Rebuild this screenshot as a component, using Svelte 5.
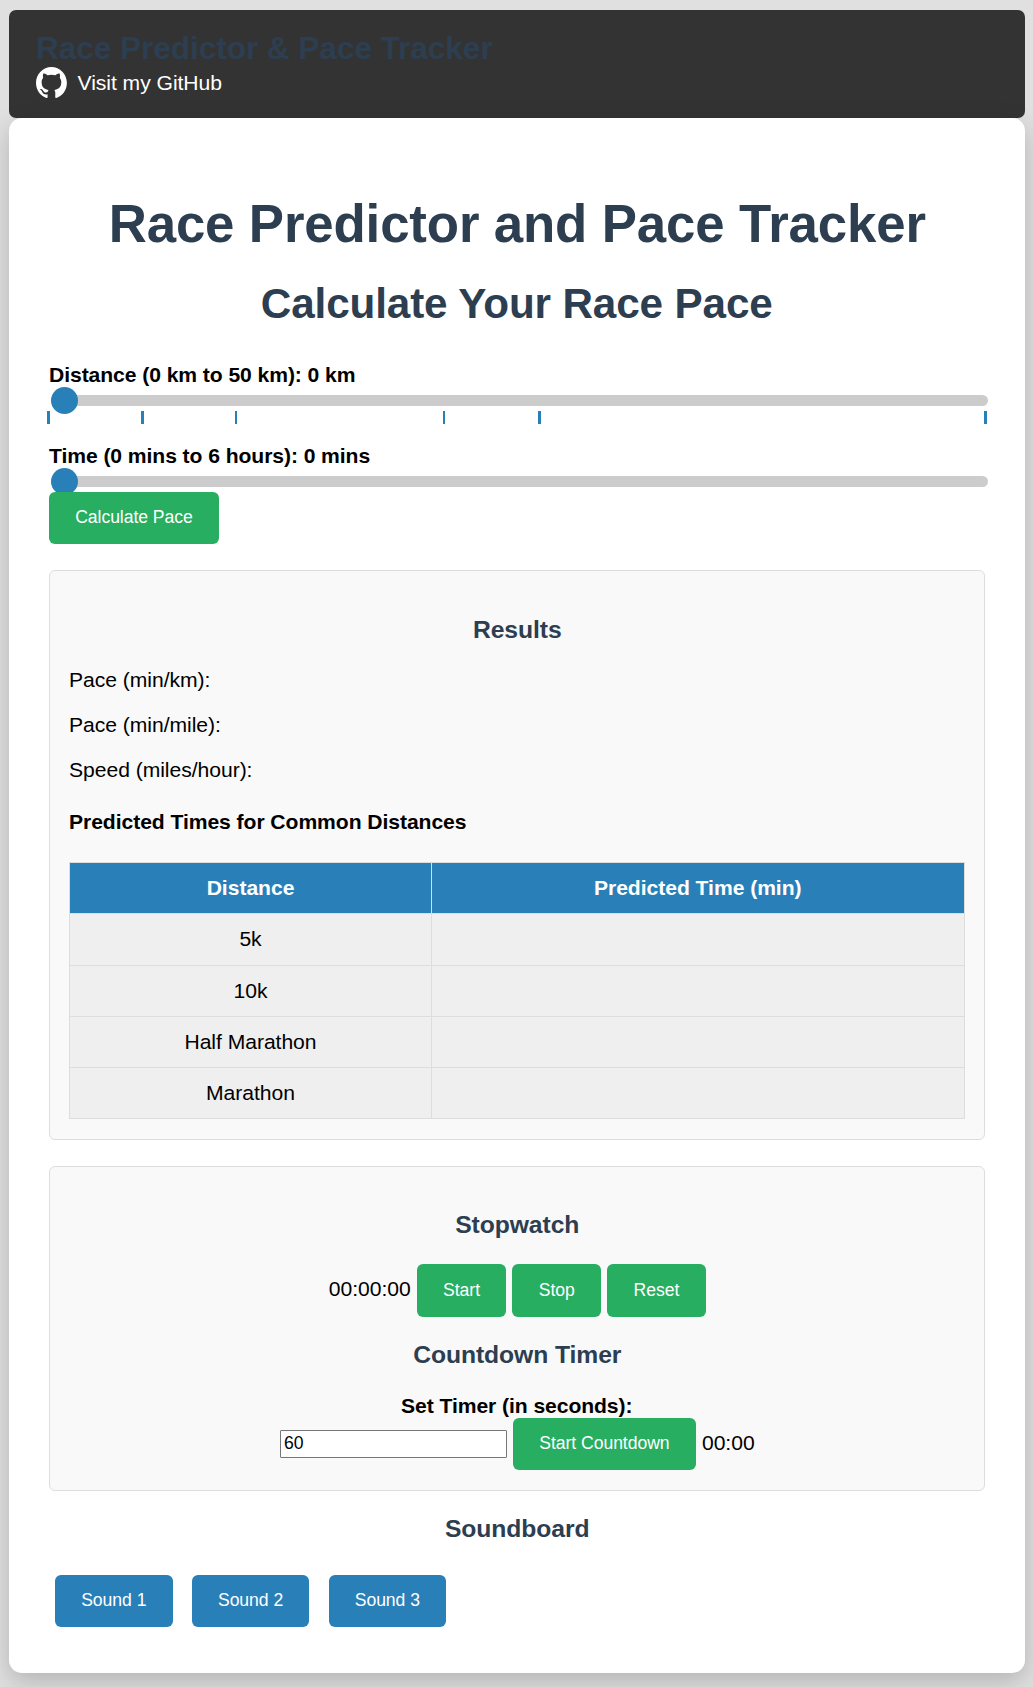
<script>
  let distance = $state(0);
  let time = $state(0);
  let seconds = $state(60);

  // Positions of the 0k, 5k, 10k, half marathon, marathon and 50k marks
  const ticks = [
    { left: -2, width: 3 },
    { left: 92, width: 3 },
    { left: 186, width: 2 },
    { left: 394, width: 2 },
    { left: 489, width: 3 },
    { left: 935, width: 3 },
  ];
  const races = ['5k', '10k', 'Half Marathon', 'Marathon'];
  const sounds = ['Sound 1', 'Sound 2', 'Sound 3'];
</script>

<div class="page">
  <header>
    <h1>Race Predictor &amp; Pace Tracker</h1>
    <a href="#github">
      <svg viewBox="0 0 98 96" preserveAspectRatio="none" aria-hidden="true">
        <path fill="#fff" fill-rule="evenodd" d="M48.854 0C21.839 0 0 22 0 49.217c0 21.756 13.993 40.172 33.405 46.69 2.427.49 3.316-1.059 3.316-2.362 0-1.141-.08-5.052-.08-9.127-13.59 2.934-16.42-5.867-16.42-5.867-2.184-5.704-5.42-7.17-5.42-7.17-4.448-3.015.324-3.015.324-3.015 4.934.326 7.523 5.052 7.523 5.052 4.367 7.496 11.404 5.378 14.235 4.074.404-3.178 1.699-5.378 3.074-6.6-10.839-1.141-22.243-5.378-22.243-24.283 0-5.378 1.94-9.778 5.014-13.2-.485-1.222-2.184-6.275.486-13.038 0 0 4.125-1.304 13.426 5.052a46.97 46.97 0 0 1 12.214-1.63c4.125 0 8.33.571 12.213 1.63 9.302-6.356 13.427-5.052 13.427-5.052 2.67 6.763.97 11.816.485 13.038 3.155 3.422 5.015 7.822 5.015 13.2 0 18.905-11.404 23.06-22.324 24.283 1.78 1.548 3.316 4.481 3.316 9.126 0 6.6-.08 11.897-.08 13.526 0 1.304.89 2.853 3.316 2.364 19.412-6.52 33.405-24.935 33.405-46.691C97.707 22 75.788 0 48.854 0z" />
      </svg>
      <span>Visit my GitHub</span>
    </a>
  </header>

  <main>
    <h1>Race Predictor and Pace Tracker</h1>
    <h2>Calculate Your Race Pace</h2>

    <label for="distance">Distance (0 km to 50 km): {distance} km</label>
    <input id="distance" type="range" min="0" max="50" bind:value={distance} />
    <div class="ticks">
      {#each ticks as tick}
        <span style="left: {tick.left}px; width: {tick.width}px"></span>
      {/each}
    </div>

    <label for="time">Time (0 mins to 6 hours): {time} mins</label>
    <input id="time" type="range" min="0" max="360" bind:value={time} />
    <button class="calculate">Calculate Pace</button>

    <section class="panel results">
      <h3>Results</h3>
      <p>Pace (min/km):</p>
      <p>Pace (min/mile):</p>
      <p>Speed (miles/hour):</p>
      <h4>Predicted Times for Common Distances</h4>
      <table>
        <thead>
          <tr><th class="name">Distance</th><th>Predicted Time (min)</th></tr>
        </thead>
        <tbody>
          {#each races as race}
            <tr><td>{race}</td><td></td></tr>
          {/each}
        </tbody>
      </table>
    </section>

    <section class="panel timers">
      <h3>Stopwatch</h3>
      <div class="row stopwatch">
        <span>00:00:00</span>
        <button>Start</button>
        <button>Stop</button>
        <button>Reset</button>
      </div>
      <h3>Countdown Timer</h3>
      <label for="seconds">Set Timer (in seconds):</label>
      <div class="row countdown">
        <input id="seconds" class="seconds" type="number" bind:value={seconds} />
        <button>Start Countdown</button>
        <span>00:00</span>
      </div>
    </section>

    <h3 class="sound-title">Soundboard</h3>
    <div class="sounds">
      {#each sounds as sound}
        <button>{sound}</button>
      {/each}
    </div>
  </main>
</div>

<style>
  :global(body) {
    background: #e0e0e0;
  }
  .page {
    box-sizing: border-box;
    height: 1687px;
    padding: 10px 8.5px 0 9px;
    overflow: hidden;
    font: 21.12px/24px Arial, "Liberation Sans", sans-serif;
    letter-spacing: -0.04px;
    color: #000;
  }
  h1, h2, h3, h4, p {
    margin: 0;
  }
  h1, h2, h3 {
    color: #2c3e50;
    text-align: center;
  }
  header {
    box-sizing: border-box;
    height: 108px;
    padding: 20px 27px 0;
    background: #333;
    border-radius: 7px;
  }
  header h1 {
    font-size: 31.68px;
    line-height: 36px;
    letter-spacing: -0.1px;
    text-align: left;
  }
  header a {
    display: flex;
    align-items: center;
    gap: 10.5px;
    width: max-content;
    margin-top: 1px;
    color: #fff;
    text-decoration: none;
  }
  header svg {
    width: 31px;
    height: 31px;
  }
  main {
    box-sizing: border-box;
    height: 1555px;
    padding: 76px 40px 0;
    background: #fff;
    border-radius: 13px;
    box-shadow: 0 9px 26px rgba(0, 0, 0, 0.2);
  }
  main > h1 {
    padding-left: 1px;
    font-size: 52.8px;
    line-height: 60px;
    letter-spacing: -0.15px;
  }
  h2 {
    margin: 25.5px 0 35.5px;
    font-size: 42.24px;
    line-height: 48px;
    letter-spacing: -0.13px;
  }
  h3 {
    position: relative;
    top: 1px;
    padding-left: 1px;
    font-size: 24.7px;
    line-height: 28px;
    letter-spacing: -0.08px;
  }
  h4 {
    font-size: 21.12px;
    letter-spacing: -0.06px;
  }
  label {
    display: block;
    font-weight: bold;
    letter-spacing: -0.07px;
  }
  input[type="range"] {
    appearance: none;
    display: block;
    width: calc(100% + 1.5px);
    height: 11px;
    margin: 8px 2px 0;
    background: #ccc;
    border-radius: 5.5px;
    outline: none;
  }
  input[type="range"]::-webkit-slider-thumb {
    appearance: none;
    width: 27px;
    height: 27px;
    background: #2980b9;
    border: 0;
    border-radius: 50%;
  }
  .ticks {
    position: relative;
    height: 13px;
    margin: 5px 0 20px;
  }
  .ticks span {
    position: absolute;
    top: 0;
    height: 13px;
    background: #2980b9;
  }
  button {
    height: 52px;
    padding: 0 26.4px 2px;
    border: 0;
    border-radius: 6px;
    background: #27ae60;
    color: #fff;
    font: 17.6px/20px Arial, "Liberation Sans", sans-serif;
    letter-spacing: -0.05px;
  }
  .calculate {
    display: block;
    position: relative;
    margin-top: 5px;
    padding: 0 26.2px 2px;
    letter-spacing: -0.06px;
  }
  .panel {
    box-sizing: border-box;
    margin-top: 26px;
    padding: 0 19px;
    background: #f9f9f9;
    border: 1px solid #ddd;
    border-radius: 6px;
  }
  .results {
    height: 570px;
    padding-top: 44px;
  }
  .results h3 {
    margin-bottom: 25px;
  }
  .results p {
    margin-bottom: 21px;
  }
  .results h4 {
    margin: 28px 0;
  }
  table {
    width: 100%;
    border-collapse: collapse;
    table-layout: fixed;
  }
  th, td {
    height: 51.3px;
    box-sizing: border-box;
    padding: 0;
    border: 1px solid #ddd;
    text-align: center;
  }
  th {
    background: #2980b9;
    color: #fff;
  }
  td {
    background: #efefef;
  }
  .name {
    width: 362px;
  }
  .timers {
    height: 325px;
    padding-top: 43px;
    text-align: center;
  }
  .row {
    display: flex;
    justify-content: center;
    align-items: baseline;
    gap: 6px;
    padding-left: 1px;
  }
  .stopwatch {
    margin: 26px 0 23px;
  }
  .stopwatch button {
    height: 53px;
  }
  .timers label {
    margin-top: 26px;
  }
  .countdown {
    align-items: flex-start;
  }
  .countdown span {
    margin-top: 13px;
  }
  .seconds {
    box-sizing: border-box;
    width: 227px;
    height: 28px;
    margin-top: 12px;
    padding: 0 3px 2px;
    border: 1px solid #767676;
    border-radius: 1px;
    background: #fff;
    font: 17.6px/20px Arial, "Liberation Sans", sans-serif;
  }
  .sound-title {
    margin-top: 23px;
  }
  .sounds {
    display: flex;
    gap: 19.2px;
    margin: 33px 0 0 6px;
  }
  .sounds button {
    padding: 0 26.2px 2px;
    background: #2980b9;
  }
</style>
